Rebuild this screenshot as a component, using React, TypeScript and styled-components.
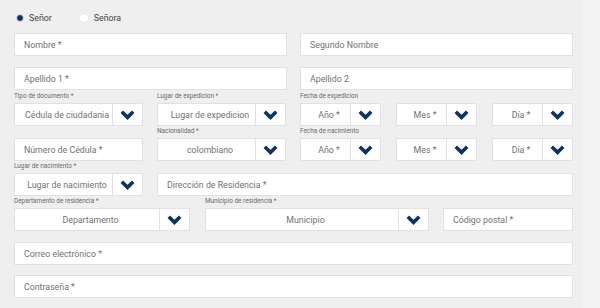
import React from "react";
import styled, { createGlobalStyle } from "styled-components";

const Global = createGlobalStyle`
  html, body { margin: 0; padding: 0; background: #f3f3f3; }
  body { font-family: Roboto, "Liberation Sans", Arial, sans-serif; }
  * { box-sizing: border-box; }
`;

const Panel = styled.div`
  width: 582px;
  height: 308px;
  background: #efefef;
  padding: 11px 0 0 14px;
  display: flex;
  flex-direction: column;
`;

const RadioRow = styled.div`
  display: flex;
  align-items: center;
  height: 14px;
  padding-left: 1px;
  margin-bottom: 8px;
`;

const RadioItem = styled.label<{ $ml?: number }>`
  display: flex;
  align-items: center;
  gap: 5px;
  margin-left: ${(p) => p.$ml ?? 0}px;
  font-size: 8.8px;
  color: #444;
`;

const RadioDot = styled.span<{ $checked?: boolean }>`
  width: ${(p) => (p.$checked ? 8 : 10)}px;
  height: ${(p) => (p.$checked ? 8 : 10)}px;
  border-radius: 50%;
  background: ${(p) => (p.$checked ? "#0c3468" : "#ffffff")};
  border: ${(p) => (p.$checked ? "1px solid #e4e7ee" : "1px solid #e8e8e8")};
`;

const Row = styled.div<{ $mt?: number }>`
  display: flex;
  align-items: flex-end;
  margin-top: ${(p) => p.$mt ?? 0}px;
`;

const Field = styled.div<{ $w: number; $ml?: number }>`
  width: ${(p) => p.$w}px;
  margin-left: ${(p) => p.$ml ?? 0}px;
  display: flex;
  flex-direction: column;
`;

const Label = styled.div`
  font-size: 6.4px;
  line-height: 8px;
  color: #6a6a6a;
  height: 12px;
  padding-top: 1px;
  white-space: nowrap;
`;

const Box = styled.div`
  height: 23px;
  background: #fff;
  border: 1px solid #e1e1e1;
  display: flex;
  align-items: center;
  font-size: 8.8px;
  color: #727272;
`;

const InputText = styled.span`
  padding-left: 9px;
  white-space: nowrap;
`;

const SelectText = styled.span`
  flex: 1;
  text-align: center;
  padding-left: 7px;
  white-space: nowrap;
  overflow: hidden;
`;

const ChevCell = styled.span`
  width: 30px;
  height: 100%;
  border-left: 1px solid #e1e1e1;
  display: flex;
  align-items: center;
  justify-content: center;
  flex-shrink: 0;
`;

const Chevron = () => (
  <svg width="15" height="10" viewBox="0 0 15 10">
    <path
      d="M1.8 1.8 L7.5 7.4 L13.2 1.8"
      fill="none"
      stroke="#0b3466"
      strokeWidth="3.6"
      strokeLinejoin="miter"
    />
  </svg>
);

type FProps = { w: number; ml?: number; label?: string; text: string; select?: boolean };

const F = ({ w, ml, label, text, select }: FProps) => (
  <Field $w={w} $ml={ml}>
    {label !== undefined && <Label>{label}</Label>}
    <Box>
      {select ? (
        <>
          <SelectText>{text}</SelectText>
          <ChevCell>
            <Chevron />
          </ChevCell>
        </>
      ) : (
        <InputText>{text}</InputText>
      )}
    </Box>
  </Field>
);

export default function App() {
  return (
    <>
      <Global />
      <Panel>
        <RadioRow>
          <RadioItem $ml={1}>
            <RadioDot $checked />
            Señor
          </RadioItem>
          <RadioItem $ml={27}>
            <RadioDot />
            Señora
          </RadioItem>
        </RadioRow>
        <Row>
          <F w={273} text="Nombre *" />
          <F w={273} ml={13} text="Segundo Nombre" />
        </Row>
        <Row $mt={11}>
          <F w={273} text="Apellido 1 *" />
          <F w={273} ml={13} text="Apellido 2" />
        </Row>
        <Row $mt={1}>
          <F w={129} label="Tipo de documento *" text="Cédula de ciudadania" select />
          <F w={129} ml={14} label="Lugar de expedicion *" text="Lugar de expedicion" select />
          <F w={81} ml={14} label="Fecha de expedicion" text="Año *" select />
          <F w={81} ml={15} label="" text="Mes *" select />
          <F w={81} ml={15} label="" text="Día *" select />
        </Row>
        <Row>
          <F w={129} text="Número de Cédula *" />
          <F w={129} ml={14} label="Nacionalidad *" text="colombiano" select />
          <F w={81} ml={14} label="Fecha de nacimiento" text="Año *" select />
          <F w={81} ml={15} label="" text="Mes *" select />
          <F w={81} ml={15} label="" text="Día *" select />
        </Row>
        <Row>
          <F w={129} label="Lugar de nacimiento *" text="Lugar de nacimiento" select />
          <F w={416} ml={14} text="Dirección de Residencia *" />
        </Row>
        <Row>
          <F w={176} label="Departamento de residencia *" text="Departamento" select />
          <F w={224} ml={15} label="Municipio de residencia *" text="Municipio" select />
          <F w={130} ml={14} text="Código postal *" />
        </Row>
        <Row $mt={11}>
          <F w={559} text="Correo electrónico *" />
        </Row>
        <Row $mt={10}>
          <F w={559} text="Contraseña *" />
        </Row>
      </Panel>
    </>
  );
}
